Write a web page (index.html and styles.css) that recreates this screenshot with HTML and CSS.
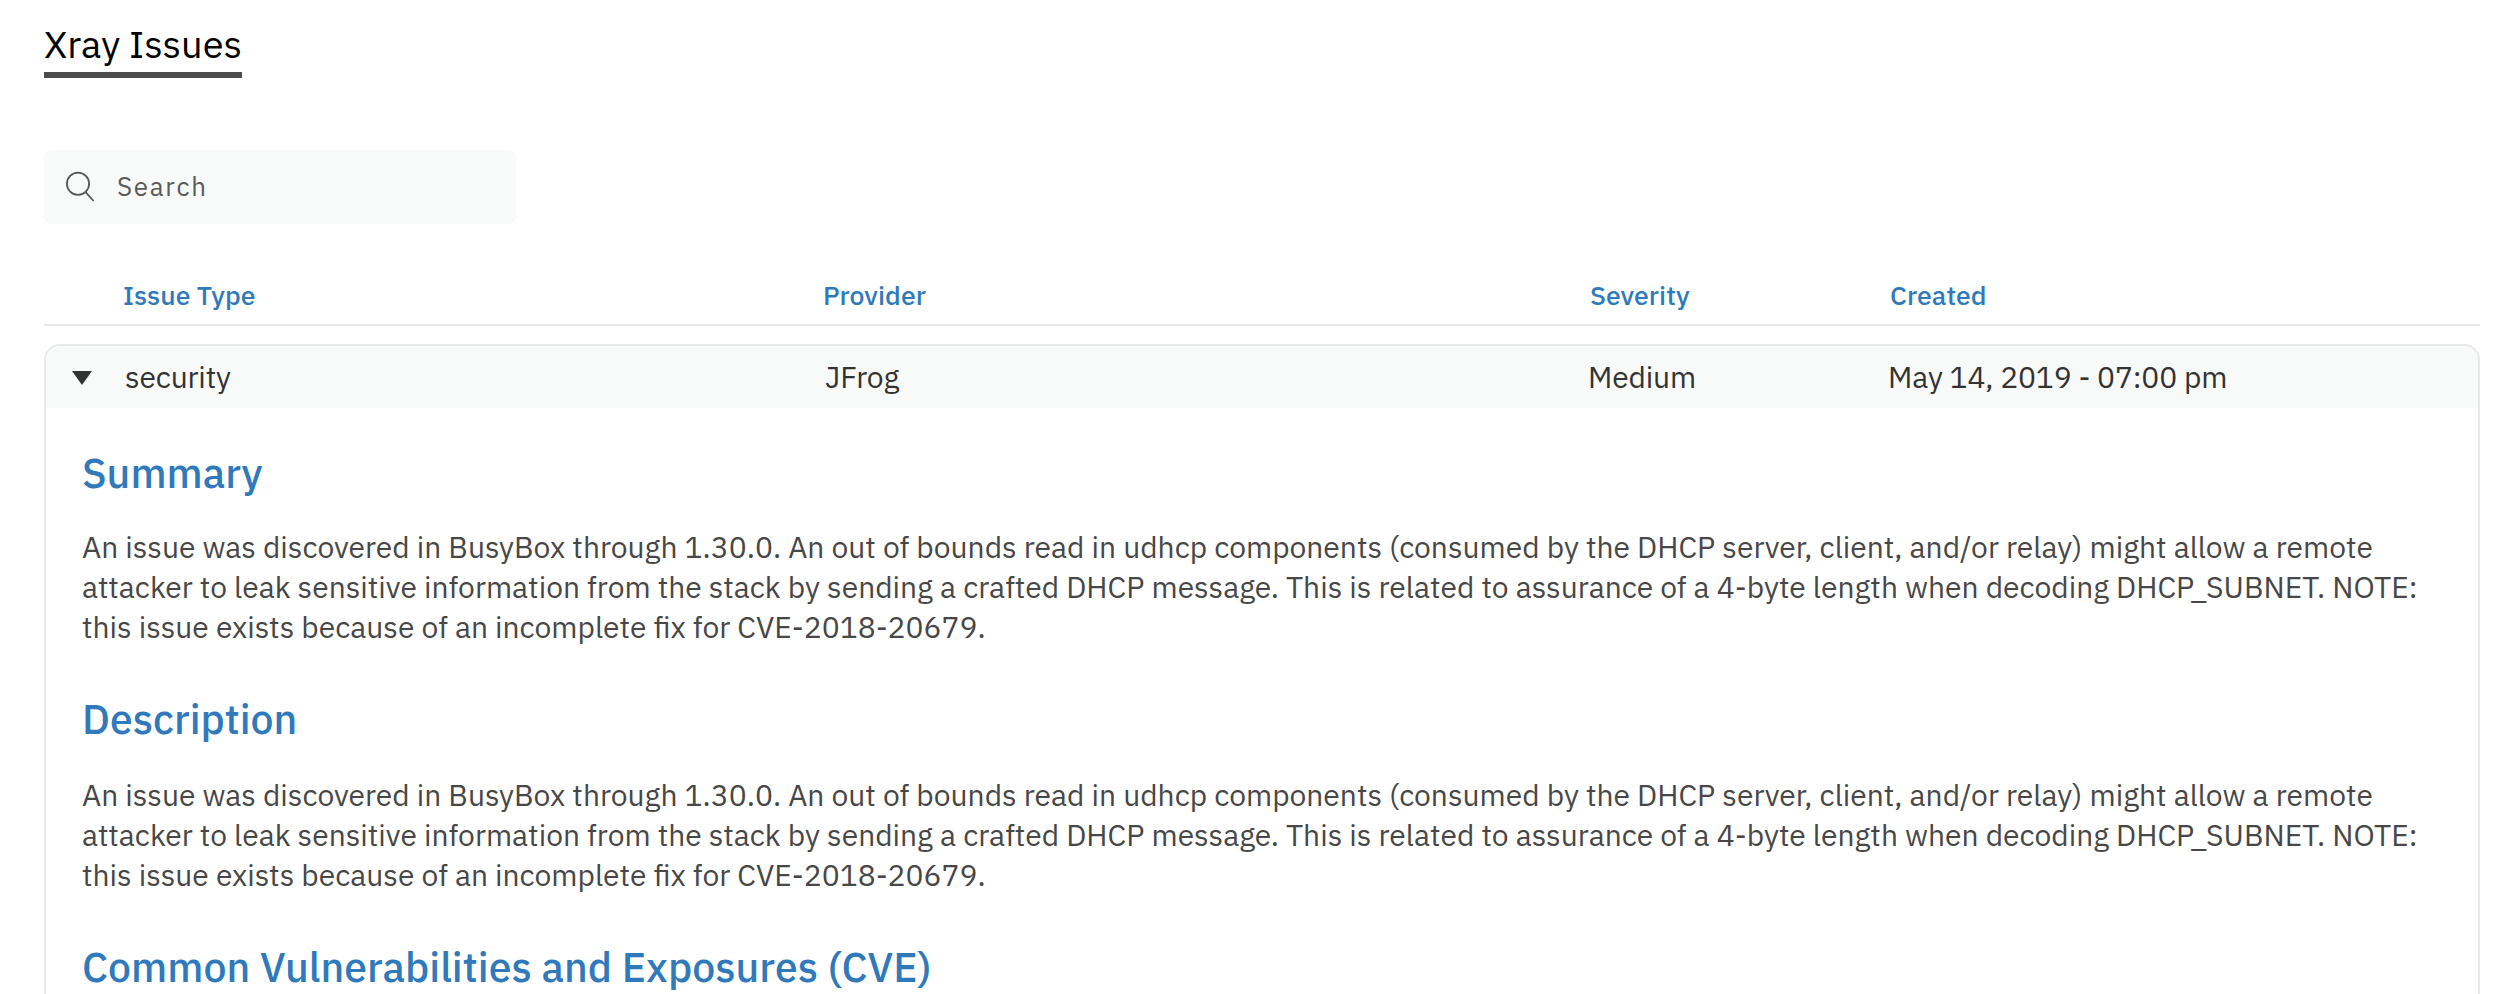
FILE: index.html
```html
<!DOCTYPE html>
<html lang="en">
<head>
<meta charset="utf-8">
<title>Xray Issues</title>
<link rel="stylesheet" href="styles.css">
</head>
<body>
<main class="page">
  <h1 class="page-title">Xray Issues</h1>
  <div class="search">
    <svg class="search-icon" width="30" height="32" viewBox="0 0 30 32" fill="none" stroke="#555" stroke-width="1.8">
      <circle cx="12" cy="12.8" r="11.1"/>
      <path d="M19.6 21.2L27.6 30"/>
    </svg>
    <span class="search-label">Search</span>
  </div>
  <div class="grid-row table-head">
    <span></span><span>Issue Type</span><span>Provider</span><span>Severity</span><span>Created</span>
  </div>
  <section class="issue">
    <div class="grid-row issue-row">
      <svg class="caret" width="20" height="14" viewBox="0 0 20 14"><path d="M0 0H20L10 14Z" fill="#333"/></svg>
      <span>security</span><span>JFrog</span><span>Medium</span><span>May 14, 2019 - 07:00 pm</span>
    </div>
    <div class="issue-body">
      <h2 class="heading">Summary</h2>
      <p class="text">An issue was discovered in BusyBox through 1.30.0. An out of bounds read in udhcp components (consumed by the DHCP server, client, and/or relay) might allow a remote attacker to leak sensitive information from the stack by sending a crafted DHCP message. This is related to assurance of a 4-byte length when decoding DHCP_SUBNET. NOTE: this issue exists because of an incomplete fix for CVE-2018-20679.</p>
      <h2 class="heading">Description</h2>
      <p class="text">An issue was discovered in BusyBox through 1.30.0. An out of bounds read in udhcp components (consumed by the DHCP server, client, and/or relay) might allow a remote attacker to leak sensitive information from the stack by sending a crafted DHCP message. This is related to assurance of a 4-byte length when decoding DHCP_SUBNET. NOTE: this issue exists because of an incomplete fix for CVE-2018-20679.</p>
      <h2 class="heading">Common Vulnerabilities and Exposures (CVE)</h2>
    </div>
  </section>
</main>
</body>
</html>
```
FILE: styles.css
```css
* { box-sizing: border-box; }
body {
  margin: 0;
  height: 994px;
  overflow: hidden;
  background: #fff;
  font-family: "IBM Plex Sans", Roboto, sans-serif;
}
.page { padding: 19px 28px 0 44px; }
.page-title {
  width: max-content;
  height: 59px;
  margin: 0;
  border-bottom: 6px solid #4c4c4c;
  font-size: 38px;
  font-weight: 400;
  line-height: 50px;
  color: #000;
}
.search {
  display: flex;
  align-items: center;
  width: 472px;
  height: 74px;
  margin-top: 72px;
  padding-left: 22px;
  border-radius: 8px;
  background: #f8faf9;
}
.search-icon { flex: none; }
.search-label {
  margin: 0 0 2px 21px;
  font-size: 26px;
  letter-spacing: 1.7px;
  color: #5a5a5a;
}
.grid-row {
  display: grid;
  align-items: center;
}
.table-head {
  grid-template-columns: 79px 700px 767px 300px 1fr;
  height: 56px;
  margin-top: 46px;
  border-bottom: 2px solid #e8e8e8;
  padding-bottom: 4px;
  font-size: 26.6px;
  font-weight: 500;
  letter-spacing: 0.05px;
  line-height: 50px;
  color: #307abc;
}
.issue {
  height: 650px;
  margin-top: 18px;
  border: 2px solid #e8e8e8;
  border-bottom: 0;
  border-radius: 16px 16px 0 0;
  overflow: hidden;
}
.issue-row {
  grid-template-columns: 79px 700px 763px 300px 1fr;
  height: 62px;
  background: #f8faf9;
  font-size: 30px;
  letter-spacing: -0.17px;
  line-height: 62px;
  color: #333;
}
.caret { margin: 2px 0 0 26px; }
.issue-body { padding: 39px 36px 0; }
.heading {
  margin: 0 0 28px;
  font-size: 41px;
  font-weight: 500;
  letter-spacing: 0.03px;
  line-height: 52px;
  color: #307abc;
}
.text {
  margin: 0 0 46px;
  font-size: 30px;
  line-height: 40px;
  color: #474747;
}
.text + .heading { margin-bottom: 30px; }
```
